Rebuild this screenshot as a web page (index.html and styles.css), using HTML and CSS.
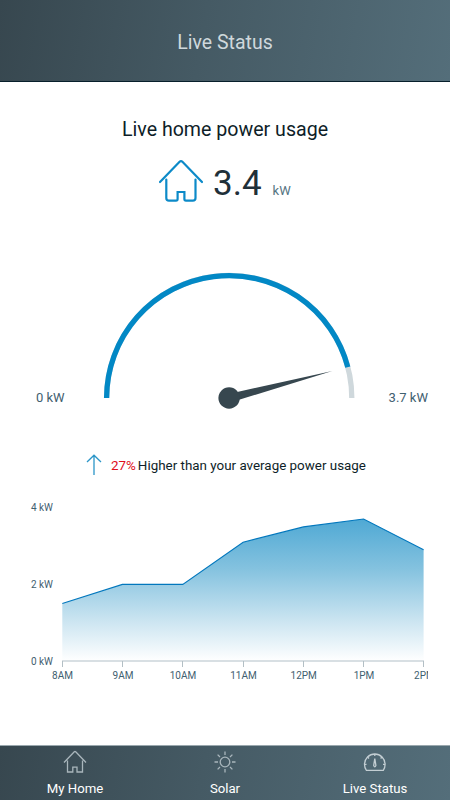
FILE: index.html
```html
<!DOCTYPE html>
<html lang="en">
<head>
  <meta charset="UTF-8" />
  <meta name="viewport" content="width=device-width, initial-scale=1.0"/>
  <title>Live Status</title>
  <link rel="stylesheet" href="styles.css">
</head>
<body>
  <header>
    <h1>Live Status</h1>
  </header>

  <main>
    <!-- Current usage -->
    <section class="usage">
      <h2>Live home power usage</h2>
      <div class="reading">
        <svg class="house" width="46" height="46" viewBox="0 0 46 46">
          <path d="M2 24 L21.6 3.8 Q23 2.4 24.4 3.8 L44 24"/>
          <path d="M8.3 21.5 V40 Q8.3 42.7 11 42.7 H18 Q19.6 42.7 19.6 41 V34 H26.4 V41 Q26.4 42.7 28 42.7 H34.8 Q37.5 42.7 37.5 40 V21.5"/>
        </svg>
        <span class="value">3.4</span>
        <span class="unit">kW</span>
      </div>
    </section>

    <!-- Gauge -->
    <section class="gauge">
      <span class="min">0 kW</span>
      <svg width="260" height="150" viewBox="99 265 260 150">
        <path class="track" d="M106.6 398 A122.6 122.6 0 0 1 351.8 398"/>
        <path class="level" d="M106.6 398 A122.6 122.6 0 0 1 347.8 367.1"/>
        <path class="needle" d="M228.2 394 L332.3 371 L230.2 402.6 Z"/>
        <circle class="needle" cx="229.1" cy="398" r="10.7"/>
      </svg>
      <span class="max">3.7 kW</span>
    </section>

    <!-- Comparison with average -->
    <section class="compare">
      <svg width="18" height="22" viewBox="0 0 18 22">
        <path d="M9 21 V1.5 M2 8 L9 1.2 L16 8"/>
      </svg>
      <span class="percent">27%</span>
      <span class="message">Higher than your average power usage</span>
    </section>

    <!-- Usage through the day -->
    <svg class="chart" width="408" height="190" viewBox="20 497 408 190">
      <defs>
        <linearGradient id="fill" x1="0" y1="0" x2="0" y2="1">
          <stop offset="0" stop-color="#4fa9d4"/>
          <stop offset="0.35" stop-color="#84c2df"/>
          <stop offset="0.7" stop-color="#c8e3f0"/>
          <stop offset="1" stop-color="#ffffff"/>
        </linearGradient>
      </defs>
      <path fill="url(#fill)" d="M62.3 661 V603.5 L122.4 584.4 H182.8 L243.1 542.2 L303.4 526.9 L363.6 519 L423.6 549.8 V661 Z"/>
      <path class="line" d="M62.3 603.5 L122.4 584.4 H182.8 L243.1 542.2 L303.4 526.9 L363.6 519 L423.6 549.8"/>
      <path class="axis" d="M62 661 H424"/>
      <path class="ticks" d="M62.5 661 V667 M122.5 661 V667 M182.5 661 V667 M243.5 661 V667 M303.5 661 V667 M363.5 661 V667 M423.5 661 V667"/>
      <g class="y-labels">
        <text x="53" y="511.3">4 kW</text>
        <text x="53" y="588">2 kW</text>
        <text x="53" y="664.6">0 kW</text>
      </g>
      <g class="x-labels">
        <text x="62.5" y="678.6">8AM</text>
        <text x="123" y="678.6">9AM</text>
        <text x="183" y="678.6">10AM</text>
        <text x="243.5" y="678.6">11AM</text>
        <text x="303.7" y="678.6">12PM</text>
        <text x="364" y="678.6">1PM</text>
        <text x="424.4" y="678.6">2PM</text>
      </g>
    </svg>
  </main>

  <nav>
    <a href="#">
      <svg width="24" height="24" viewBox="0 0 24 24">
        <path d="M1 12.5 L11.3 1.8 Q12 1.2 12.7 1.8 L23 12.5 M4.5 10.5 V22 H9.8 V17.2 H14 V22 H19.5 V10.5"/>
      </svg>
      <span>My Home</span>
    </a>
    <a href="#">
      <svg width="24" height="24" viewBox="0 0 24 24">
        <circle cx="12" cy="12" r="4.8"/>
        <path d="M12 1.5 V5 M12 19 V22.5 M1.5 12 H5 M19 12 H22.5 M4.6 4.6 L7 7 M17 17 L19.4 19.4 M4.6 19.4 L7 17 M17 7 L19.4 4.6"/>
      </svg>
      <span>Solar</span>
    </a>
    <a href="#">
      <svg class="dial" width="24" height="24" viewBox="0 0 24 24">
        <path d="M3.4 20.3 Q1.5 18 1.5 14.3 A10.3 10.3 0 0 1 22.1 14.3 Q22.1 18 20.3 20.3 Z"/>
        <path d="M11.8 4 V6 M1.5 14.3 H3.5 M20 14.3 H22 M4.5 7 L6 8.5 M19 7 L17.6 8.5 M11.8 8.5 L10.7 15.5 Q11.8 18.3 12.9 15.5 Z"/>
      </svg>
      <span>Live Status</span>
    </a>
  </nav>
</body>
</html>
```
FILE: styles.css
```css
* {
  box-sizing: border-box;
}

body {
  font-family: Roboto, sans-serif;
  margin: 0;
  height: 800px;
  display: flex;
  flex-direction: column;
  background: #fff;
  color: #0e1e28;
  overflow: hidden;
}

svg {
  display: block;
  flex: none;
  fill: none;
}

header, nav {
  background: linear-gradient(100deg, #37474f, #455a64 45%, #546e7a);
}

header {
  height: 82px;
  padding-top: 4px;
  display: flex;
  align-items: center;
  justify-content: center;
  border-bottom: 1px solid #071f2b;
}

h1 {
  margin: 0;
  font-size: 19.5px;
  font-weight: 400;
  color: #cfd8dc;
}

main {
  flex: 1;
}

.usage {
  padding-top: 36px;
  text-align: center;
}

h2 {
  margin: 0;
  font-size: 19.6px;
  line-height: 24px;
  font-weight: 400;
}

.reading {
  display: flex;
  align-items: baseline;
  height: 59px;
  padding: 16px 0 0 158px;
  line-height: 52px;
}

.house {
  align-self: flex-start;
  stroke: #0c8ac8;
  stroke-width: 2.2;
  stroke-linecap: round;
}

.value {
  margin-left: 9px;
  font-size: 35px;
  color: #1f3039;
}

.unit {
  margin-left: 11px;
  font-size: 13px;
  color: #557482;
}

.gauge {
  display: flex;
  align-items: flex-end;
  justify-content: space-between;
  margin-top: 64px;
  padding: 0 22px 0 36px;
  height: 150px;
  font-size: 13px;
  line-height: 16px;
  color: #3f6070;
}

.gauge span {
  width: 63px;
  padding-bottom: 9px;
}

.gauge .max {
  width: 69px;
  text-align: right;
}

.track, .level {
  stroke-width: 5.3;
  stroke: #cfd8dc;
}

.level {
  stroke: #0288c5;
}

.needle {
  fill: #37474f;
}

.compare {
  display: flex;
  align-items: center;
  height: 22px;
  margin-top: 39px;
  padding-left: 85px;
  font-size: 13.4px;
}

.compare svg {
  stroke: #2c96c8;
  stroke-width: 1.3;
}

.percent {
  margin-left: 8px;
  color: #e0101c;
}

.message {
  margin-left: 2px;
}

.chart {
  margin: 21px 0 0 20px;
  font-size: 10px;
  overflow: hidden;
}

.chart text {
  fill: #3f6070;
}

.line {
  stroke: #0277bd;
  stroke-width: 1.1;
}

.axis {
  stroke: #d8dfe3;
  stroke-width: 2;
}

.ticks {
  stroke: #b3bfc5;
}

.y-labels {
  text-anchor: end;
}

.x-labels {
  text-anchor: middle;
}

nav {
  display: flex;
  height: 55px;
  border-top: 1px solid #9aa8ae;
}

nav a {
  flex: 1;
  display: flex;
  flex-direction: column;
  align-items: center;
  padding-top: 4px;
  font-size: 13.2px;
  line-height: 16px;
  color: #fff;
  text-decoration: none;
}

nav span {
  margin-top: 7px;
}

nav svg {
  stroke: #a9b6bc;
  stroke-width: 1.3;
}

nav .dial {
  stroke: #c3ced3;
}
```
